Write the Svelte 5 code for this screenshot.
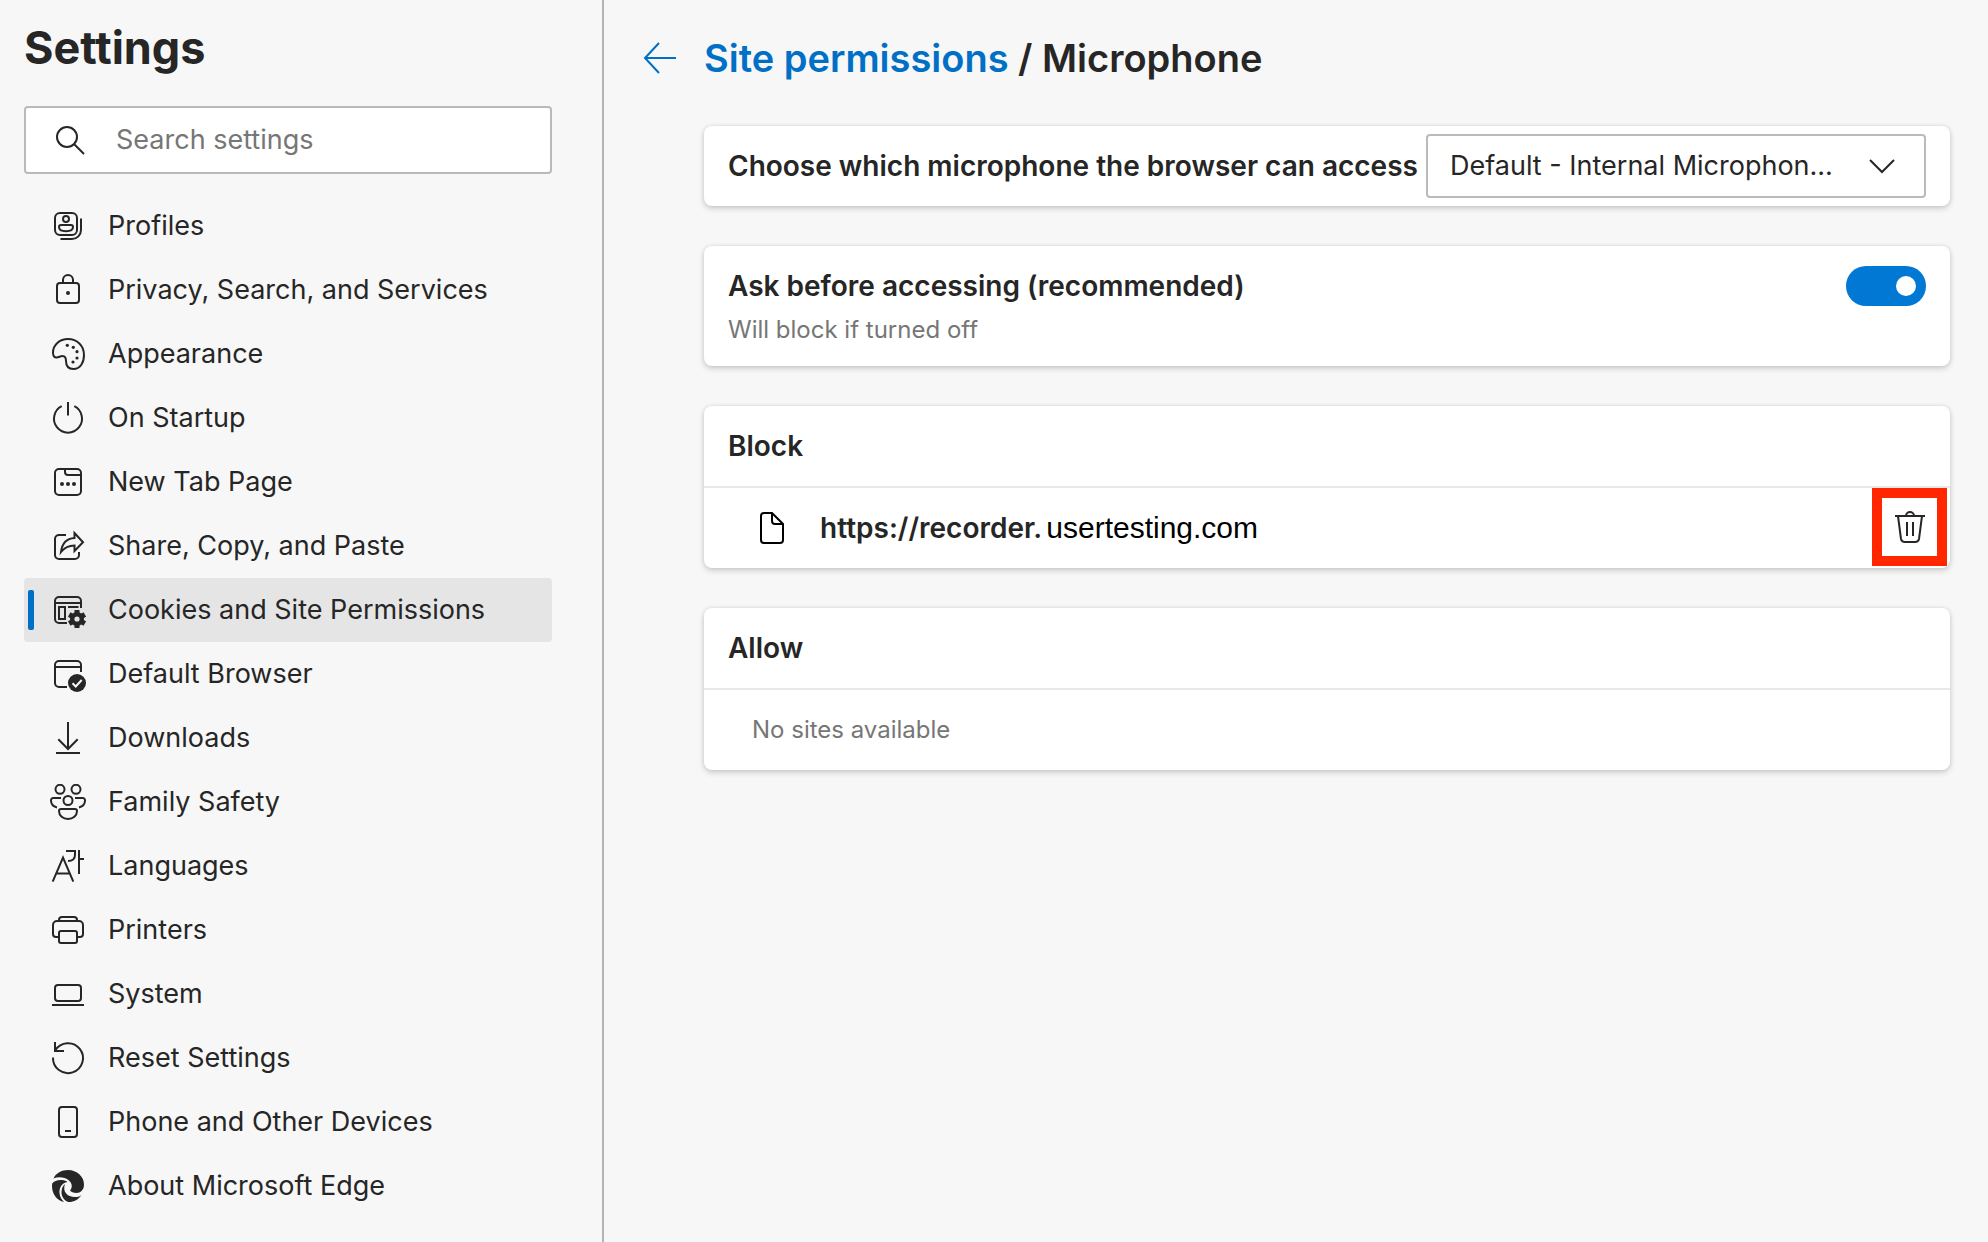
<script lang="ts">
    type NavItem = { label: string; icon: string };

    const navItems: NavItem[] = [
        { label: "Profiles", icon: "profiles" },
        { label: "Privacy, Search, and Services", icon: "lock" },
        { label: "Appearance", icon: "palette" },
        { label: "On Startup", icon: "power" },
        { label: "New Tab Page", icon: "tab" },
        { label: "Share, Copy, and Paste", icon: "share" },
        { label: "Cookies and Site Permissions", icon: "permissions" },
        { label: "Default Browser", icon: "browser" },
        { label: "Downloads", icon: "download" },
        { label: "Family Safety", icon: "family" },
        { label: "Languages", icon: "languages" },
        { label: "Printers", icon: "printer" },
        { label: "System", icon: "system" },
        { label: "Reset Settings", icon: "reset" },
        { label: "Phone and Other Devices", icon: "phone" },
        { label: "About Microsoft Edge", icon: "edge" },
    ];

    let active = $state("permissions");
    let search = $state("");
    let askFirst = $state(true);
    let blocked = $state([{ origin: "https://recorder.", domain: "usertesting.com" }]);

    function select(event: MouseEvent, icon: string) {
        event.preventDefault();
        active = icon;
    }

    function remove(index: number) {
        blocked.splice(index, 1);
    }
</script>

{#snippet navIcon(name: string)}
    <svg class="icon" viewBox="0 0 36 36" aria-hidden="true">
        {#if name === "profiles"}
            <rect x="5" y="5" width="22" height="22" rx="5" />
            <circle cx="16" cy="11" r="3" />
            <path d="M11 17h10a2 2 0 0 1 2 2c0 2.700-3 4.200-7 4.200s-7-1.500-7-4.200a2 2 0 0 1 2-2z" />
            <path d="M31 10.500V22a9 9 0 0 1-9 9H10.500" />
        {:else if name === "lock"}
            <rect x="7" y="11" width="22" height="20" rx="3" />
            <path d="M13 11V8a5 5 0 0 1 10 0v3" />
            <circle class="fill" cx="18" cy="21" r="2" />
        {:else if name === "palette"}
            <path
                d="M3 16.500C3 9 9.500 3 18 3c9 0 16 6.500 16 16 0 8-4 14-10.500 14-5 0-7.500-3-7.500-8 0-3.500-1-5-3.500-5s-3.500 1.500-6 1.500S3 19 3 16.500z"
            />
            <g class="fill">
                <circle cx="17.300" cy="9.300" r="1.600" />
                <circle cx="23.300" cy="11.300" r="1.600" />
                <circle cx="27" cy="15.700" r="1.600" />
                <circle cx="27" cy="22" r="1.600" />
                <circle cx="23" cy="26" r="1.600" />
            </g>
        {:else if name === "power"}
            <path d="M11.700 6.200a14 14 0 1 0 12.600 0M18 2v13.500" />
        {:else if name === "tab"}
            <rect x="5" y="5" width="26" height="26" rx="4" />
            <path d="M15 5v3a3 3 0 0 0 3 3h13" />
            <g class="fill">
                <circle cx="12" cy="20" r="2" />
                <circle cx="18" cy="20" r="2" />
                <circle cx="24" cy="20" r="2" />
            </g>
        {:else if name === "share"}
            <path d="M16 7H9a4 4 0 0 0-4 4v16a4 4 0 0 0 4 4h16a4 4 0 0 0 4-4v-3" />
            <path d="M24.500 5l8.500 9.300-8.500 8.700v-5.500c-6 0-10 2-13.500 6.500C12 16 16 10.500 24.500 10z" />
        {:else if name === "permissions"}
            <path d="M17 31H9a4 4 0 0 1-4-4V9a4 4 0 0 1 4-4h18a4 4 0 0 1 4 4v7M5 11h26M18 15h10.500" />
            <rect x="9" y="15" width="6" height="12" />
            <circle class="fill" cx="27" cy="27" r="7" />
            <path class="teeth" d="M27 18v18M19.200 22.500l15.600 9M34.800 22.500l-15.600 9" />
            <circle class="hole" cx="27" cy="27" r="2.600" />
        {:else if name === "browser"}
            <path d="M17 31H9a4 4 0 0 1-4-4V9a4 4 0 0 1 4-4h18a4 4 0 0 1 4 4v7M5 11h26" />
            <circle class="fill" cx="27" cy="27" r="9" />
            <path class="knockout" d="M22.500 27.300l3.200 3.200 6-6.500" />
        {:else if name === "download"}
            <path d="M18 2v27M8.300 19.300L18 29l9.700-9.700M6 33h24" />
        {:else if name === "family"}
            <circle cx="10" cy="5.300" r="4.500" />
            <circle cx="26" cy="5.300" r="4.500" />
            <circle cx="18" cy="16.500" r="4.500" />
            <path d="M11 14H3.500A2.300 2.300 0 0 0 1 16.500c0 3.500 2.500 6 6 7M25 14h7.500a2.300 2.300 0 0 1 2.500 2.500c0 3.500-2.500 6-6 7" />
            <path d="M11 25h14a2 2 0 0 1 2 2c0 4.700-4 8-9 8s-9-3.300-9-8a2 2 0 0 1 2-2z" />
        {:else if name === "languages"}
            <path d="M2.700 33.700L13 9.500l10.300 24.200M6.500 25.500h13M16 3h9v3.500c0 4-2.500 6.500-7 6.500M29 2v24M29 11h5" />
        {:else if name === "printer"}
            <path d="M9 25H6a3 3 0 0 1-3-3v-9a4 4 0 0 1 4-4h22a4 4 0 0 1 4 4v9a3 3 0 0 1-3 3h-3" />
            <path d="M9 9V8a3 3 0 0 1 3-3h12a3 3 0 0 1 3 3v1" />
            <rect x="9" y="19" width="18" height="12" rx="2" />
        {:else if name === "system"}
            <rect x="5" y="9" width="26" height="16" rx="3" />
            <path d="M2 29h32" />
        {:else if name === "reset"}
            <path d="M3 17.500a15 15 0 1 0 2.200-7.200M5 2v9h9" />
        {:else if name === "phone"}
            <rect x="9" y="3" width="18" height="30" rx="3" />
            <path d="M15 27h6" />
        {:else if name === "edge"}
            <g class="fill">
                <path d="M3.500 10.500C6 5 11.500 2 18 2c9 0 16 6.500 16 14.500 0 5.500-3.500 8.500-7.500 8.500-3 0-5.500-1-6.500-2.500 2.500-2.500 2.500-7-1-10-4-3.500-11-4-15.500-2z" />
                <path d="M2.200 15.500C4 13 8 11.500 12 12c2.500.200 4.500 1 5.500 2-5.500.500-8.500 6-8 11 .300 4 2 6.500 4.500 9C7 32.500 2 26 2 18z" />
                <path d="M15 16c-3 8 3 14 12 13 1.500 0 3-.700 4.500-2-3 4.500-7.500 7-12.500 7-4-.500-7.500-5-7.500-9.500 0-3.500 1-6.500 3.500-8.500z" />
            </g>
        {/if}
    </svg>
{/snippet}

<div class="page">
    <nav class="sidebar">
        <h1>Settings</h1>
        <label class="search">
            <svg class="icon" viewBox="0 0 36 36" aria-hidden="true">
                <circle cx="15" cy="15" r="10" />
                <path d="M22 22l10 10" />
            </svg>
            <input type="text" placeholder="Search settings" aria-label="Search settings" bind:value={search} />
        </label>
        <ul>
            {#each navItems as item (item.icon)}
                <li>
                    <a
                        href="#{item.icon}"
                        class:active={active === item.icon}
                        onclick={(event) => select(event, item.icon)}
                    >
                        {@render navIcon(item.icon)}
                        {item.label}
                    </a>
                </li>
            {/each}
        </ul>
    </nav>

    <main>
        <header>
            <button class="back" aria-label="Back">
                <svg class="icon" viewBox="0 0 36 36" aria-hidden="true">
                    <path d="M17 3L3 18l14 15M3 18h31" />
                </svg>
            </button>
            <h2><a href="#permissions">Site permissions</a> / Microphone</h2>
        </header>

        <div class="cards">
            <section class="card row">
                <label class="name" for="device">Choose which microphone the browser can access</label>
                <div class="dropdown">
                    <select id="device">
                        <option>Default - Internal Microphon...</option>
                    </select>
                    <svg class="icon" viewBox="0 0 36 36" aria-hidden="true">
                        <path d="M6 12l12 12 12-12" />
                    </svg>
                </div>
            </section>

            <section class="card ask">
                <div>
                    <label class="name" for="ask">Ask before accessing (recommended)</label>
                    <p>Will block if turned off</p>
                </div>
                <input id="ask" class="toggle" type="checkbox" role="switch" bind:checked={askFirst} />
            </section>

            <section class="card">
                <h3>Block</h3>
                {#each blocked as site, i (site.domain)}
                    <div class="site">
                        <svg class="icon file" viewBox="0 0 36 36" aria-hidden="true">
                            <path d="M18 3H10a3 3 0 0 0-3 3v24a3 3 0 0 0 3 3h16a3 3 0 0 0 3-3V14zM18 3v8a3 3 0 0 0 3 3h8" />
                        </svg>
                        <span class="name">{site.origin}</span>
                        <span class="domain">{site.domain}</span>
                        <button class="delete" aria-label="Remove {site.domain}" onclick={() => remove(i)}>
                            <svg class="icon" viewBox="0 0 36 36" aria-hidden="true">
                                <path d="M3 7h30M6 7l3 23a4 4 0 0 0 4 3h10a4 4 0 0 0 4-3l3-23M14 7a4 4 0 0 1 8 0M15 13v14M21 13v14" />
                            </svg>
                        </button>
                    </div>
                {/each}
            </section>

            <section class="card">
                <h3>Allow</h3>
                <p class="empty">No sites available</p>
            </section>
        </div>
    </main>
</div>

<style>
    :global(body) {
        background: #f7f7f7;
    }
    .page {
        display: flex;
        min-height: 100vh;
        color: #262626;
        font-family: Inter, "Liberation Sans", sans-serif;
        font-size: 27px;
        line-height: 36px;
    }
    h1,
    h2,
    h3,
    p,
    ul {
        margin: 0;
        padding: 0;
        font-weight: 600;
    }
    .icon {
        flex: none;
        width: 36px;
        height: 36px;
        fill: none;
        stroke: currentColor;
        stroke-width: 2;
    }
    .fill {
        fill: currentColor;
        stroke: none;
    }
    .knockout {
        stroke: #f7f7f7;
    }
    .teeth {
        stroke-width: 5;
    }
    .hole {
        fill: #e5e5e5;
        stroke: none;
    }

    .sidebar {
        box-sizing: border-box;
        flex: none;
        width: 604px;
        padding: 16px 50px 24px 24px;
        border-right: 2px solid #b3b3b3;
    }
    h1 {
        margin-bottom: 26px;
        font-size: 45px;
        font-weight: 700;
        line-height: 64px;
    }
    .search {
        box-sizing: border-box;
        display: flex;
        align-items: center;
        gap: 28px;
        height: 68px;
        padding: 0 26px;
        background: #fff;
        border: 2px solid #bababa;
        border-radius: 4px;
    }
    .search input {
        flex: 1;
        min-width: 0;
        padding: 0;
        border: 0;
        outline: 0;
        background: none;
        color: inherit;
        font: inherit;
    }
    .search input::placeholder {
        color: #767676;
        opacity: 1;
    }
    .sidebar ul {
        margin-top: 20px;
        list-style: none;
    }
    .sidebar li a {
        position: relative;
        display: flex;
        align-items: center;
        gap: 22px;
        height: 64px;
        padding-left: 26px;
        border-radius: 4px;
        color: inherit;
        font-weight: 400;
        text-decoration: none;
    }
    .sidebar li a.active {
        background: #e5e5e5;
    }
    .sidebar li a.active::before {
        content: "";
        position: absolute;
        left: 4px;
        top: 12px;
        width: 6px;
        height: 40px;
        border-radius: 2px;
        background: #0070c6;
    }

    main {
        flex: 1;
        min-width: 0;
        padding: 32px 38px 40px;
    }
    header {
        display: flex;
        align-items: center;
        gap: 26px;
        margin-bottom: 42px;
    }
    button {
        display: flex;
        align-items: center;
        justify-content: center;
        padding: 0;
        border: 0;
        background: none;
        color: inherit;
    }
    .back {
        color: #0070c6;
    }
    h2 {
        font-size: 38px;
        line-height: 52px;
    }
    h2 a {
        color: #0070c6;
        text-decoration: none;
    }

    .cards {
        display: flex;
        flex-direction: column;
        gap: 40px;
        margin-left: 62px;
    }
    .card {
        background: #fff;
        border-radius: 8px;
        box-shadow:
            0 0 4px rgba(0, 0, 0, 0.12),
            0 3px 6px rgba(0, 0, 0, 0.14);
    }
    .name {
        font-size: 28px;
        font-weight: 600;
    }
    .row {
        display: flex;
        align-items: center;
        justify-content: space-between;
        gap: 4px;
        padding: 8px 24px;
    }
    .dropdown {
        position: relative;
        flex: none;
        width: 500px;
    }
    .dropdown select {
        appearance: none;
        display: block;
        width: 100%;
        height: 64px;
        padding: 0 22px;
        border: 2px solid #bababa;
        border-radius: 4px;
        background: #fff;
        color: inherit;
        font: inherit;
    }
    .dropdown .icon {
        position: absolute;
        right: 26px;
        top: 14px;
        pointer-events: none;
    }

    .ask {
        display: flex;
        align-items: flex-start;
        justify-content: space-between;
        padding: 20px 24px 16px;
    }
    .ask .name {
        display: block;
        margin-bottom: 4px;
        line-height: 40px;
    }
    .card p {
        color: #767676;
        font-size: 24px;
        font-weight: 400;
        line-height: 40px;
    }
    .toggle {
        appearance: none;
        display: flex;
        align-items: center;
        justify-content: flex-start;
        box-sizing: border-box;
        flex: none;
        width: 80px;
        height: 40px;
        margin: 0;
        padding: 0 10px;
        border-radius: 20px;
        background: #767676;
    }
    .toggle:checked {
        justify-content: flex-end;
        background: #0078d4;
    }
    .toggle::before {
        content: "";
        width: 20px;
        height: 20px;
        border-radius: 50%;
        background: #fff;
    }

    h3 {
        padding: 22px 24px;
        font-size: 28px;
        line-height: 36px;
    }
    .site {
        display: flex;
        align-items: center;
        height: 80px;
        padding: 0 3px 0 50px;
        border-top: 2px solid #e8e8e8;
    }
    .file {
        margin-right: 30px;
        color: #000;
    }
    .domain {
        margin-left: 4px;
        color: #000;
        font-family: "Liberation Sans", sans-serif;
        font-size: 30px;
    }
    .delete {
        box-sizing: border-box;
        align-self: flex-start;
        width: 75px;
        height: 78px;
        margin-left: auto;
        border: 10px solid #ff2600;
    }
    .card .empty {
        padding: 20px 48px;
        border-top: 2px solid #e8e8e8;
    }
</style>
